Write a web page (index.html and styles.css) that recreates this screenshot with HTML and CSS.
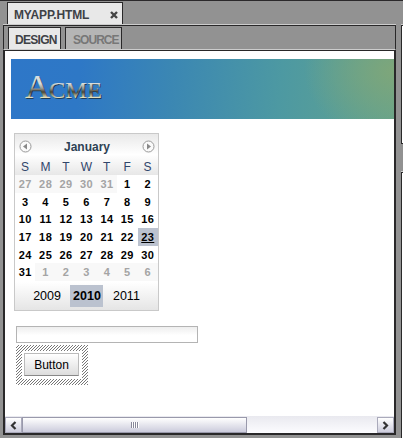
FILE: index.html
```html
<!DOCTYPE html>
<html lang="en">
<head>
<meta charset="utf-8">
<title>MYAPP.HTML</title>
<link rel="stylesheet" href="styles.css">
</head>
<body>
<div class="workspace">
  <main class="editor">
    <div class="file-tabs"><div class="file-tab"><span>MYAPP.HTML</span><svg width="8" height="8" viewBox="0 0 8 8"><path d="M1 1l6 6M7 1L1 7" stroke="#444" stroke-width="2.4"/></svg></div></div>
    <section class="panel">
      <div class="view-tabs"><div class="view-tab active">DESIGN</div><div class="view-tab">SOURCE</div></div>
      <div class="canvas">
        <div class="page">
          <header class="banner">
            <svg width="100" height="60" viewBox="0 0 100 60">
              <defs><linearGradient id="metal" gradientUnits="userSpaceOnUse" x1="0" y1="15" x2="0" y2="39"><stop offset="0" stop-color="#d5dee2"/><stop offset=".4" stop-color="#d9dddb"/><stop offset=".6" stop-color="#999992"/><stop offset=".75" stop-color="#494335"/><stop offset="1" stop-color="#f1edc8"/></linearGradient></defs>
              <g class="logo shadow"><text x="15" y="39.5" font-size="34" textLength="25" lengthAdjust="spacingAndGlyphs">A</text><text x="39" y="39.5" font-size="24" textLength="53" lengthAdjust="spacingAndGlyphs">CME</text></g>
              <g class="logo metal"><text x="14" y="38.5" font-size="34" textLength="25" lengthAdjust="spacingAndGlyphs">A</text><text x="38" y="38.5" font-size="24" textLength="53" lengthAdjust="spacingAndGlyphs">CME</text></g>
            </svg>
          </header>
          <div class="calendar">
            <div class="cal-head">
              <div class="month"><svg width="13" height="13" viewBox="0 0 13 13"><circle cx="6.5" cy="6.5" r="5.5" fill="#fafafa" stroke="#999"/><path d="M8 3.5v6L4 6.5z" fill="#888"/></svg><span>January</span><svg width="13" height="13" viewBox="0 0 13 13"><circle cx="6.5" cy="6.5" r="5.5" fill="#fafafa" stroke="#999"/><path d="M5 3.5v6l4-3z" fill="#888"/></svg></div>
              <div class="week names"><span>S</span><span>M</span><span>T</span><span>W</span><span>T</span><span>F</span><span>S</span></div>
            </div>
            <div class="week"><i>27</i><i>28</i><i>29</i><i>30</i><i>31</i><b>1</b><b>2</b></div>
            <div class="week"><b>3</b><b>4</b><b>5</b><b>6</b><b>7</b><b>8</b><b>9</b></div>
            <div class="week"><b>10</b><b>11</b><b>12</b><b>13</b><b>14</b><b>15</b><b>16</b></div>
            <div class="week"><b>17</b><b>18</b><b>19</b><b>20</b><b>21</b><b>22</b><b class="today">23</b></div>
            <div class="week"><b>24</b><b>25</b><b>26</b><b>27</b><b>28</b><b>29</b><b>30</b></div>
            <div class="week"><b>31</b><i>1</i><i>2</i><i>3</i><i>4</i><i>5</i><i>6</i></div>
            <div class="years"><span>2009</span><b>2010</b><span>2011</span></div>
          </div>
          <input class="field" type="text" aria-label="Text">
          <div class="selection">
            <svg width="72" height="40" shape-rendering="crispEdges"><defs><pattern id="hatch" width="3" height="3" patternUnits="userSpaceOnUse"><path d="M2 0h1v1h-1zM1 1h1v1h-1zM0 2h1v1h-1z" fill="#777"/></pattern></defs><path d="M0 0h72v40H0zM6 6v28h60V6z" fill="url(#hatch)" fill-rule="evenodd"/></svg>
            <button>Button</button>
          </div>
        </div>
        <div class="scrollbar">
          <div class="arrow"><svg width="7" height="9" viewBox="0 0 7 9"><path d="M5.5 1L2 4.5 5.5 8" fill="none" stroke="#333" stroke-width="2.2"/></svg></div>
          <div class="thumb"><span class="grip"></span></div>
          <div class="arrow next"><svg width="7" height="9" viewBox="0 0 7 9"><path d="M1.5 1L5 4.5 1.5 8" fill="none" stroke="#333" stroke-width="2.2"/></svg></div>
        </div>
      </div>
    </section>
  </main>
  <aside class="side"><div class="box top"></div><div class="box rest"></div></aside>
</div>
</body>
</html>
```
FILE: styles.css
```css
* { box-sizing: border-box; }
body { margin: 0; width: 403px; height: 438px; overflow: hidden; background: #929292; font-family: "Liberation Sans", Arial, sans-serif; }
svg { display: block; flex: none; }
.workspace { display: flex; height: 438px; padding-left: 3px; border-top: 1px solid #2b292b; }
.editor { width: 393px; display: flex; flex-direction: column; }
.file-tabs { height: 23px; padding: 1px 0 0 4px; }
.file-tab { width: 116px; height: 22px; display: flex; align-items: center; justify-content: space-between; padding: 2px 4px 0 6px; background: #e8e8e8; border: 1px solid #292829; border-bottom: 0; font-size: 12px; font-weight: bold; color: #3e4146; }
.file-tab span { width: 76px; letter-spacing: -.15px; }
.panel { height: 411px; border-top: 1px solid #ccc; display: flex; flex-direction: column; }
.view-tabs { height: 25px; display: flex; gap: 4px; padding: 1px 0 0 4px; border: 1px solid #292829; border-bottom-color: #ccc; }
.view-tab { height: 22px; width: 57px; padding-left: 7px; border: 1px solid #292829; border-bottom: 0; background: #b5b5b5; color: #777; font-size: 12px; font-weight: bold; line-height: 24px; letter-spacing: -.95px; }
.view-tab.active { width: 53px; padding-left: 6px; background: #e8e8e8; color: #3e4146; letter-spacing: -.7px; }
.canvas { flex: 1; border: 2px solid #292829; border-top-width: 1px; background: #fff; display: flex; flex-direction: column; }
.page { flex: 1; padding: 8px 0 0 6px; }
.banner { height: 60px; background: radial-gradient(ellipse 90px 70px at 100% 20%, #7ea67a, transparent), linear-gradient(95deg, #2e77c8 0%, #2e78c6 18%, #3b87b3 42%, #4d99a2 70%, #63a38e 100%); }
.logo { font-family: "Liberation Serif", serif; }
.shadow { fill: #213b51; }
.metal { fill: url(#metal); stroke: url(#metal); stroke-width: .2px; }
.calendar { width: 145px; height: 178px; margin: 14px 0 0 3px; border: 1px solid #c9c9c9; font-size: 11px; }
.cal-head { height: 41px; background: linear-gradient(#e9e9e9, #fff 50%, #e7e7e7); }
.month { height: 24px; display: flex; justify-content: space-between; align-items: center; padding: 0 3px 0 4px; color: #2e4254; font-weight: bold; font-size: 12px; }
.month span { padding-top: 2px; }
.week { display: grid; grid-template-columns: repeat(7, 1fr); height: 17.7px; line-height: 18px; text-align: center; letter-spacing: .4px; }
.week i { font-style: normal; font-weight: bold; color: #a4a4a4; background: #f8f8f8; }
.names { height: 17px; color: #30466b; font-size: 12px; }
.today { background: #bbc2cf; text-decoration: underline; }
.years { height: 28px; display: flex; justify-content: center; align-items: center; gap: 9.5px; margin-top: 1px; background: linear-gradient(#fff, #e5e5e5); font-size: 12.5px; }
.years b { width: 33px; height: 22px; line-height: 22px; text-align: center; background: #bbc2cf; }
.field { display: block; width: 182px; height: 17px; margin: 15px 0 0 5px; border: 1px solid #b4b4b4; outline: 0; background: linear-gradient(#eee, #fff 55%); }
.selection { display: grid; width: 72px; height: 40px; margin: 2px 0 0 5px; }
.selection > * { grid-area: 1 / 1; }
.selection button { width: 55px; height: 23px; margin: 8px; padding: 0; border: 1px solid #bbb; border-bottom-color: #888; background: linear-gradient(#fff, #ddd); color: #000; font: 12px "Liberation Sans", Arial, sans-serif; }
.scrollbar { height: 17px; display: flex; background: linear-gradient(#e9e9ef, #fcfcff); }
.arrow { width: 17px; margin-top: 1px; border: 1px solid #aaaabb; background: linear-gradient(#fff, #cdcddd); display: flex; align-items: center; justify-content: center; }
.thumb { width: 225px; margin-top: 1px; border: 1px solid #9999ab; background: linear-gradient(#fff, #cbcbdc); display: flex; align-items: center; justify-content: center; }
.grip { width: 8px; height: 6px; background: repeating-linear-gradient(90deg, #88889a 0 1px, #fff 1px 2px); }
.next { margin-left: auto; }
.side { margin-left: 5px; width: 2px; padding-top: 24px; }
.box { border: 1px solid #292829; border-right: 0; background: #fff; box-shadow: 0 -1px #ccc; }
.top { height: 119px; }
.rest { height: 267px; margin-top: 28px; }
```
